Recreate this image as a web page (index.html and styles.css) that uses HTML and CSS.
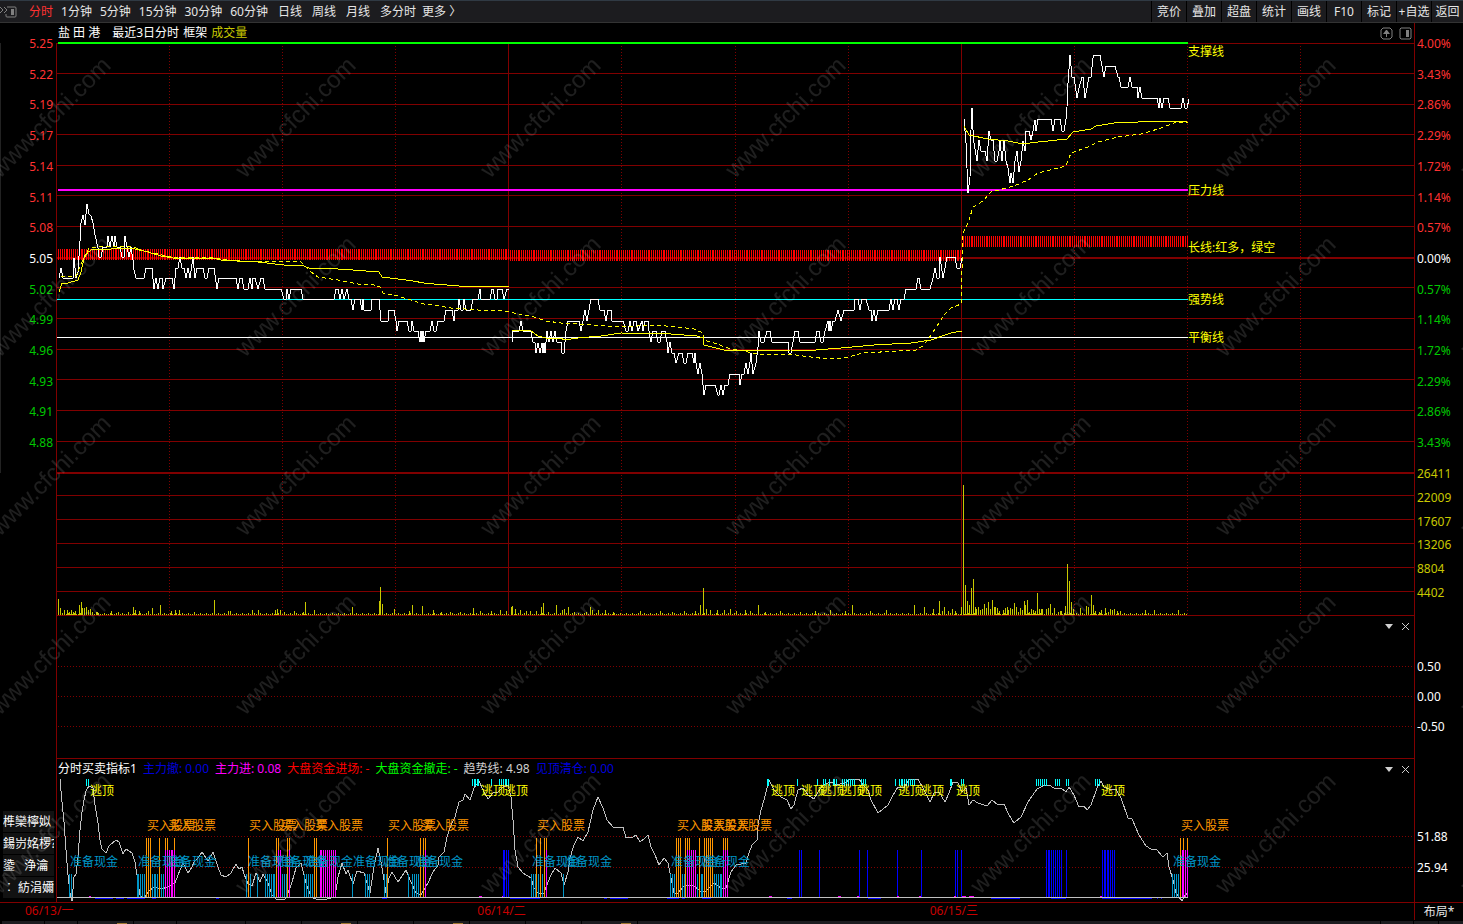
FILE: index.html
```html
<!DOCTYPE html>
<html lang="zh-CN">
<head>
    <meta charset="UTF-8">
    <meta name="viewport" content="width=device-width, initial-scale=1.0">
    <title>盐田港 分时</title>
    <link rel="stylesheet" href="styles.css">
</head>
<body>
    <header class="toolbar">
        <button class="dock-button" aria-label="展开">
            <svg width="18" height="14" viewBox="0 0 18 14">
                <path d="M0 2l3 3-3 3M4 2l3 3-3 3" />
                <path d="M7 2h8q1 0 1 1v8q0 1-1 1H7q-1 0-1-1V9" />
                <path class="filled" d="M11 4h3v6h-3z" />
            </svg>
        </button>
        <nav class="periods">
            <button class="active">分时</button>
            <button>1分钟</button>
            <button>5分钟</button>
            <button>15分钟</button>
            <button>30分钟</button>
            <button>60分钟</button>
        </nav>
        <nav class="periods periods-long">
            <button>日线</button>
            <button>周线</button>
            <button>月线</button>
            <button>多分时</button>
        </nav>
        <button class="more">更多 〉</button>
        <nav class="actions">
            <button>竞价</button>
            <button>叠加</button>
            <button>超盘</button>
            <button>统计</button>
            <button>画线</button>
            <button>F10</button>
            <button>标记</button>
            <button>+自选</button>
            <button>返回</button>
        </nav>
    </header>

    <main class="board">
        <div class="chart-title">
            <span class="stock-name">盐 田 港</span>
            <span>最近3日分时</span>
            <span>框架</span>
            <span class="olive">成交量</span>
            <span class="panel-tools">
                <button aria-label="上移">
                    <svg width="13" height="13" viewBox="0 0 13 13">
                        <path d="M3 1h7l2 2v7l-2 2H3l-2-2V3z" />
                        <path class="filled" d="M6 3h1l3 4H7v3H6V7H3z" />
                    </svg>
                </button>
                <button aria-label="侧栏">
                    <svg width="13" height="13" viewBox="0 0 13 13">
                        <path d="M2 1h9l1 1v9l-1 1H2l-1-1V2z" />
                        <path class="filled" d="M7 3h3v7H7z" />
                    </svg>
                </button>
            </span>
        </div>
        <div class="axis-right"></div>

        <ul class="axis-left">
            <li class="up">5.25</li>
            <li class="up">5.22</li>
            <li class="up">5.19</li>
            <li class="up">5.17</li>
            <li class="up">5.14</li>
            <li class="up">5.11</li>
            <li class="up">5.08</li>
            <li>5.05</li>
            <li class="down">5.02</li>
            <li class="down">4.99</li>
            <li class="down">4.96</li>
            <li class="down">4.93</li>
            <li class="down">4.91</li>
            <li class="down">4.88</li>
            <li></li>
        </ul>
        <div class="plot"><svg id="price" viewBox="57 43 1357 430" preserveAspectRatio="none"></svg></div>
        <ul class="axis-right">
            <li class="up">4.00%</li>
            <li class="up">3.43%</li>
            <li class="up">2.86%</li>
            <li class="up">2.29%</li>
            <li class="up">1.72%</li>
            <li class="up">1.14%</li>
            <li class="up">0.57%</li>
            <li>0.00%</li>
            <li class="down">0.57%</li>
            <li class="down">1.14%</li>
            <li class="down">1.72%</li>
            <li class="down">2.29%</li>
            <li class="down">2.86%</li>
            <li class="down">3.43%</li>
            <li class="olive">26411</li>
        </ul>

        <div></div>
        <div class="plot"><svg id="volume" viewBox="57 473 1357 143" preserveAspectRatio="none"></svg></div>
        <ul class="axis-right olive">
            <li></li>
            <li>22009</li>
            <li>17607</li>
            <li>13206</li>
            <li>8804</li>
            <li>4402</li>
            <li></li>
        </ul>

        <div></div>
        <div class="plot">
            <svg id="aux" viewBox="57 616 1357 143" preserveAspectRatio="none"></svg>
            <span class="panel-tools panel-corner">
                <button aria-label="菜单"><svg width="9" height="9" viewBox="0 0 9 9"><path class="glyph" d="M1 2h8L5 7z" /></svg></button>
                <button aria-label="关闭"><svg width="9" height="9" viewBox="0 0 9 9"><path class="cross" d="M1 1l7 7M8 1L1 8" /></svg></button>
            </span>
        </div>
        <ul class="axis-right axis-aux">
            <li>0.50</li>
            <li>0.00</li>
            <li>-0.50</li>
        </ul>

        <div class="side-tabs">
            <button>榫欒檸姒</button>
            <button>鍚岃姳椤?(</button>
            <button>鍌&nbsp;&nbsp; 浄瀹</button>
            <button>︰ 紡涓嬭浇</button>
        </div>
        <div class="indicator-title">
            <span>分时买卖指标1</span>
            <span class="blue">主力撤: 0.00</span>
            <span class="magenta">主力进: 0.08</span>
            <span class="red">大盘资金进场: -</span>
            <span class="green">大盘资金撤走: -</span>
            <span class="silver">趋势线: 4.98</span>
            <span class="blue">见顶清仓: 0.00</span>
            <span class="panel-tools">
                <button aria-label="菜单"><svg width="9" height="9" viewBox="0 0 9 9"><path class="glyph" d="M1 2h8L5 7z" /></svg></button>
                <button aria-label="关闭"><svg width="9" height="9" viewBox="0 0 9 9"><path class="cross" d="M1 1l7 7M8 1L1 8" /></svg></button>
            </span>
        </div>
        <div class="axis-right"></div>
        <div class="plot"><svg id="indicator" viewBox="57 779 1357 123" preserveAspectRatio="none"></svg></div>
        <ul class="axis-right axis-indicator">
            <li>51.88</li>
            <li>25.94</li>
        </ul>
    </main>

    <div class="dates">
        <span>06/13/一</span>
        <span>06/14/二</span>
        <span>06/15/三</span>
        <button class="layout-button">布局*</button>
    </div>
    <div class="tab-strip">
        <i class="w42"></i><i class="w33"></i><i class="w56 mark"></i><i class="w42"></i><i class="w69"></i><i class="w56"></i><i class="w56 mark"></i><i class="w56"></i><i class="w56 mark"></i><i class="w56"></i><i class="w56"></i><i class="w56 mark"></i><i class="rest"></i><i class="w33"></i><i class="w24"></i><i class="w24"></i>
    </div>

    <svg class="watermark" aria-hidden="true">
        <pattern id="mark" x="-72" y="29" width="245" height="179" patternUnits="userSpaceOnUse">
            <text transform="translate(128 94) rotate(-45)" text-anchor="middle">www.cfchi.com</text>
        </pattern>
        <rect width="100%" height="100%" fill="url(#mark)" />
    </svg>

    <script src="chart.js"></script>
</body>
</html>
```
FILE: styles.css
```css
* {
    box-sizing: border-box;
}

body {
    margin: 0;
    min-height: 100vh;
    display: flex;
    flex-direction: column;
    position: relative;
    overflow: hidden;
    background-color: #000;
    color: #fff;
    font-family: "Noto Sans", "Noto Sans CJK SC", sans-serif;
    font-size: 12px;
    line-height: 16px;
}

button {
    padding: 0;
    border: none;
    background: none;
    color: inherit;
    font: inherit;
    white-space: nowrap;
    cursor: pointer;
}

ul {
    margin: 0;
    padding: 0;
    list-style: none;
}

.up { color: #ff3232; }
.down { color: #00c800; }
.olive { color: #c8c800; }
.blue { color: #0000dc; }
.magenta { color: #f0f; }
.red { color: #f00; }
.green { color: #0f0; }
.silver { color: #d0d0d0; }

/* toolbar */
.toolbar {
    display: flex;
    align-items: stretch;
    height: 23px;
    border-top: 1px solid #303a44;
    border-bottom: 1px solid #333;
    background-color: #1c1c1f;
    color: #e6e6e6;
}

.dock-button {
    display: flex;
    align-items: center;
    width: 29px;
}

.toolbar svg,
.panel-tools svg {
    display: block;
    fill: none;
    stroke: #808080;
}

.toolbar svg .filled,
.panel-tools svg .filled {
    fill: #808080;
    stroke: none;
}

.periods {
    display: flex;
    gap: 8px;
}

.periods-long {
    gap: 10px;
    margin: 0 6px 0 10px;
}

.active {
    color: #ff3232;
}

.actions {
    display: flex;
    margin-left: auto;
}

.actions button {
    width: 35px;
    border-left: 1px solid #000;
    overflow: hidden;
}

.actions button:last-child {
    width: 32px;
}

/* chart grid: left axis, plot, right axis */
.board {
    flex: 1;
    display: grid;
    grid-template-columns: 56px 1fr 49px;
    grid-template-rows: 20px 430fr 143fr 143fr 20px 123fr;
    min-height: 0;
}

.chart-title {
    grid-column: 1 / 3;
    display: flex;
    align-items: center;
    gap: 4px;
    padding: 0 2px 0 58px;
}

.stock-name {
    margin-right: 8px;
}

.panel-tools {
    display: flex;
    align-items: center;
    gap: 6px;
    margin-left: auto;
}

.panel-tools .glyph {
    fill: #d0d0d0;
    stroke: none;
}

.panel-tools .cross {
    stroke: #d0d0d0;
}

.plot {
    position: relative;
    border-left: 1px solid #800000;
    min-height: 0;
}

.plot > svg {
    position: absolute;
    width: 100%;
    height: 100%;
    overflow: visible;
    shape-rendering: crispEdges;
}

.panel-corner {
    position: absolute;
    top: 6px;
    right: 4px;
}

.axis-left,
.axis-right {
    display: flex;
    flex-direction: column;
    justify-content: space-between;
}

.axis-left {
    padding-right: 3px;
    border-left: 1px solid #222;
    text-align: right;
}

.axis-right {
    padding-left: 2px;
    border-left: 1px solid #800000;
}

.axis-left li,
.axis-right li {
    height: 0;
    line-height: 1px;
}

.axis-aux {
    padding-top: 50px;
    padding-bottom: 33px;
}

.axis-indicator {
    padding-top: 57px;
    padding-bottom: 35px;
}

.side-tabs {
    grid-row: 5 / 7;
    grid-column: 1;
    display: flex;
    flex-direction: column;
    justify-content: flex-end;
    gap: 1px;
    padding: 0 2px 4px 3px;
}

.side-tabs button {
    height: 21px;
    overflow: hidden;
    background-color: #121212;
    text-align: left;
}

.indicator-title {
    display: flex;
    align-items: center;
    gap: 6px;
    padding: 0 4px 0 1px;
    border-left: 1px solid #800000;
    line-height: 14px;
    white-space: nowrap;
}

.indicator-title .panel-tools,
.panel-corner {
    gap: 8px;
}

/* series */
.grid { fill: #800000; }
.dotted { fill: none; stroke: #800000; stroke-dasharray: 1 2; }
.support { fill: #0f0; }
.pressure { fill: #f0f; }
.strong { fill: #0ff; }
.balance { fill: #fff; }
.trend-bar { fill: #f00; }
.volume-bar { fill: #c8c800; }
.price-line { fill: none; stroke: #fff; }
.average { fill: none; stroke: #ff0; }
.average-long { fill: none; stroke: #ff0; stroke-dasharray: 4 3; }
.signal-line { fill: none; stroke: #c0c0c0; }
.signal-base { fill: #c0c0c0; }
.buy-bar { fill: #ff9600; }
.inflow-bar { fill: #f0f; }
.cash-bar { fill: #0096c8; }
.outflow-bar { fill: #00f; }
.top-mark { fill: #0ff; }

/* labels sit over the chart at data positions */
.tag {
    position: absolute;
    margin-top: -7px;
    white-space: nowrap;
    color: #ff0;
}

.tag.buy { color: #ff9600; }
.tag.cash { color: #0096c8; }

.dates {
    display: grid;
    grid-template-columns: repeat(3, 1fr) 32px 49px;
    height: 18px;
    padding-left: 25px;
    border-top: 1px solid #800000;
    color: #c80000;
    line-height: 16px;
}

.layout-button {
    grid-column: 5;
    border-left: 1px solid #800000;
    color: #e6e6e6;
}

.tab-strip {
    display: flex;
    gap: 1px;
    height: 4px;
    padding: 1px 0 0 2px;
}

.tab-strip i {
    background-color: #1c1c1f;
}

.tab-strip .w24 { width: 24px; }
.tab-strip .w33 { width: 32px; }
.tab-strip .w42 { width: 42px; }
.tab-strip .w56 { width: 55px; }
.tab-strip .w69 { width: 68px; }
.tab-strip .rest { flex: 1; }

.tab-strip .mark {
    background-image: linear-gradient(#a07830, #a07830);
    background-position: right 6px bottom;
    background-repeat: no-repeat;
    background-size: 10px 1px;
}

.watermark {
    position: absolute;
    inset: 0;
    width: 100%;
    height: 100%;
    pointer-events: none;
}

.watermark text {
    fill: #fff;
    fill-opacity: 0.12;
    font-family: "Liberation Sans", Arial, sans-serif;
    font-size: 24px;
}
```
FILE: chart.js
```js
const NS = 'http://www.w3.org/2000/svg';
const LEFT = 57;
const WIDTH = 1357;
const DATA_END = 1188;
const BAR_STEP = 1.884; // 240 minutes per trading day

const price = document.getElementById('price');
const volume = document.getElementById('volume');
const aux = document.getElementById('aux');
const indicator = document.getElementById('indicator');

function add(svg, name, attrs) {
    const node = document.createElementNS(NS, name);
    Object.entries(attrs).forEach(([key, value]) => node.setAttribute(key, value));
    svg.appendChild(node);
}

function rect(svg, cls, x, y, width, height) {
    add(svg, 'rect', { class: cls, x, y, width, height });
}

function line(svg, cls, points) {
    add(svg, 'polyline', { class: cls, points, transform: 'translate(1 0)' });
}

function bars(svg, cls, xs, top, bottom) {
    xs.forEach(x => rect(svg, cls, x, top, 1, bottom - top));
}

// place a text label at chart coordinates
function tag(svg, cls, x, y, text) {
    const box = svg.viewBox.baseVal;
    const span = document.createElement('span');
    span.className = `tag ${cls}`;
    span.textContent = text;
    span.style.left = `${(x - box.x) / box.width * 100}%`;
    span.style.top = `${(y - box.y) / box.height * 100}%`;
    svg.parentNode.appendChild(span);
}

// grid
[43, 73, 104, 134, 165, 195, 226, 287, 318, 349, 379, 410, 441].forEach(y => rect(price, 'grid', LEFT, y, WIDTH, 1));
[257, 472].forEach(y => rect(price, 'grid', LEFT, y, WIDTH, 2));
[495, 519, 543, 567, 591, 615].forEach(y => rect(volume, 'grid', LEFT, y, WIDTH, 1));
[169, 282, 395, 621, 735, 848, 1074, 1187, 1300].forEach(x => {
    add(price, 'path', { class: 'dotted', d: `M${x} 46V472` });
    add(volume, 'path', { class: 'dotted', d: `M${x} 475V615` });
});
[508, 961].forEach(x => {
    rect(price, 'grid', x, 43, 1, 430);
    rect(volume, 'grid', x, 473, 1, 143);
});
[666, 696, 726].forEach(y => add(aux, 'path', { class: 'dotted', d: `M58 ${y}H1413` }));
rect(aux, 'grid', LEFT, 758, WIDTH, 1);
[836, 867].forEach(y => add(indicator, 'path', { class: 'dotted', d: `M58 ${y}H1413` }));

// long trend bars, one level per day
[[58, 249], [510, 250], [963, 236]].forEach(([start, top]) => {
    for (let i = 0; i < 240; i++) {
        const x = Math.round(start + i * BAR_STEP);
        if (x < DATA_END) rect(price, 'trend-bar', x, top, 1, 11);
    }
});

rect(price, 'support', 58, 42, 1130, 2);
rect(price, 'pressure', 58, 189, 1130, 2);
rect(price, 'strong', 57, 299, 1131, 1);
rect(price, 'balance', 57, 337, 1131, 1);

// prices
line(price, 'price-line', '58,278 60,268 62,278 72,278 73,258 75,278 77,272 79,241 80,223 82,215 84,225 86,204 88,214 90,216 92,223 94,235 97,248 98,257 100,257 102,247 106,247 107,236 109,247 111,236 113,247 114,236 116,247 119,247 121,257 123,257 124,236 126,247 128,257 130,247 132,260 133,270 135,278 143,278 145,268 151,268 153,289 155,278 157,289 159,278 161,278 162,289 165,278 171,278 173,289 175,268 177,268 179,257 181,268 183,268 185,278 187,268 189,278 192,257 194,278 196,268 202,268 204,278 206,278 208,268 213,268 216,289 218,278 235,278 237,289 239,278 241,278 243,289 247,289 249,278 251,289 252,278 254,278 257,289 260,278 262,278 264,289 280,289 283,299 285,299 286,289 288,299 290,289 300,289 302,299 333,299 335,289 337,289 339,299 341,289 343,299 346,289 348,299 350,299 352,310 354,299 359,299 361,310 362,299 363,310 370,310 371,299 378,299 380,321 387,321 388,310 393,310 395,321 396,331 398,321 406,321 408,331 410,331 411,321 413,331 417,331 419,342 420,331 421,342 422,331 423,342 425,331 429,331 431,321 433,331 435,331 437,321 443,321 445,310 451,310 453,321 454,310 457,310 458,299 460,310 462,310 463,299 465,310 470,310 472,299 477,299 479,289 480,299 489,299 491,289 492,289 494,299 496,299 497,289 501,289 503,299 506,289 508,289');
line(price, 'price-line', '511,342 512,331 518,331 520,321 522,331 530,331 532,342 534,343 535,353 537,343 539,353 541,343 542,353 543,343 544,353 546,331 548,342 550,331 552,342 554,331 556,342 560,342 561,353 563,353 565,331 567,321 578,321 580,331 582,321 584,310 586,321 588,310 590,299 597,299 599,310 603,310 605,321 607,310 610,310 611,321 622,321 625,331 627,331 629,321 631,331 633,321 635,321 637,331 641,321 642,331 644,321 647,321 648,331 650,342 652,331 655,331 657,342 659,342 661,331 664,331 666,342 667,353 669,342 671,353 673,353 675,363 678,353 681,353 683,363 685,363 687,353 691,353 693,363 694,353 695,363 697,374 699,363 701,374 702,385 703,395 705,385 714,385 717,395 718,395 720,385 722,395 724,385 727,385 729,374 738,374 739,385 741,374 743,374 745,363 747,374 749,362 750,353 752,374 755,363 757,347 758,331 760,342 763,342 766,331 769,331 771,342 787,342 788,353 790,353 792,342 794,331 797,331 799,342 814,342 816,331 818,331 820,342 822,342 824,331 827,321 828,331 829,321 830,331 832,321 834,321 837,310 840,321 843,310 853,310 854,299 857,299 859,310 861,299 865,299 868,310 870,310 871,321 873,310 875,321 877,310 888,310 890,299 892,310 894,299 896,299 898,310 900,299 903,299 905,289 915,289 917,278 918,278 920,289 929,289 932,278 934,268 936,278 938,278 939,257 942,278 944,268 946,257 954,257 956,268 959,268 961,258');
line(price, 'price-line', '963,119 965,143 967,193 969,177 970,130 971,108 972,130 973,143 976,161 978,140 980,151 984,151 986,161 988,131 990,140 992,140 994,161 996,161 998,151 999,141 1001,161 1003,141 1005,161 1007,168 1009,183 1010,173 1012,183 1014,161 1016,151 1018,172 1020,161 1022,141 1024,151 1025,131 1028,131 1030,140 1032,131 1034,120 1035,131 1037,119 1050,119 1052,131 1054,119 1059,119 1061,131 1063,131 1065,119 1066,107 1067,83 1069,55 1071,77 1073,77 1076,98 1078,88 1081,77 1082,77 1084,98 1086,88 1088,77 1090,77 1092,58 1093,55 1099,55 1101,66 1103,77 1105,66 1114,66 1117,77 1118,77 1120,87 1127,87 1129,77 1131,87 1136,87 1137,98 1139,87 1141,98 1156,98 1158,108 1159,98 1161,108 1163,98 1167,98 1169,108 1180,108 1182,98 1184,108 1186,108 1188,99');

// daily averages
line(price, 'average', '58,292 61,283 67,283 77,280 80,272 83,258 87,252 92,249 110,249 130,248 147,252 160,256 172,258 213,258 220,260 257,262 283,265 300,265 308,268 337,269 352,270 378,272 381,277 397,279 412,281 423,283 433,284 458,286 508,286');
line(price, 'average', '511,330 530,331 537,336 545,338 560,338 563,340 577,338 600,336 620,333 670,334 696,336 702,338 703,345 723,350 747,351 790,350 815,350 840,348 873,345 910,343 930,340 950,333 961,331');
line(price, 'average', '963,126 968,135 987,139 1007,141 1022,144 1037,142 1066,139 1072,132 1090,129 1095,126 1113,123 1137,122 1187,121');
line(price, 'average-long', '60,277 75,276 79,267 83,257 88,248 97,247 130,246 143,251 170,257 213,258 233,261 300,262 310,272 317,277 337,280 357,284 373,285 379,287 382,293 397,296 413,301 423,304 433,305 450,308 477,310 503,311 533,317 545,321 560,323 593,325 620,327 653,325 677,327 693,329 702,333 703,340 713,343 727,348 742,351 757,354 787,354 810,357 827,359 843,358 862,353 915,350 922,346 930,335 938,323 943,315 950,308 960,304 962,233 965,227 968,220 972,207 982,201 990,192 1013,186 1027,180 1037,173 1053,169 1065,166 1070,153 1087,147 1097,142 1117,137 1140,134 1157,129 1173,123 1187,122');

tag(price, '', 1188, 51, '支撑线');
tag(price, '', 1188, 190, '压力线');
tag(price, '', 1188, 247, '长线:红多，绿空');
tag(price, '', 1188, 299, '强势线');
tag(price, '', 1188, 337, '平衡线');

// volume: quiet minutes first, then the busy ones as x: height
for (let x = 58, i = 0; x < DATA_END; x += 2, i++) {
    const height = i % 3 === 2 ? 2 : 1;
    if (x !== 510 && x !== 962) rect(volume, 'volume-bar', x, 615 - height, 1, height);
}
const busy = {
    58: 16, 60: 7, 62: 2, 64: 5, 67: 5, 69: 3, 71: 5, 73: 3, 75: 4, 79: 10, 81: 13, 82: 7, 84: 7, 86: 8, 88: 5, 90: 6, 92: 3,
    96: 3, 97: 3, 111: 4, 118: 3, 128: 3, 133: 8, 135: 5, 139: 4, 148: 4, 152: 7, 160: 10, 171: 4, 175: 5, 179: 5, 194: 3,
    214: 15, 228: 4, 230: 4, 252: 5, 258: 5, 275: 5, 277: 6, 280: 5, 284: 3, 294: 4, 303: 3, 305: 13, 314: 5, 352: 8, 379: 14,
    380: 28, 382: 11, 394: 6, 409: 4, 412: 10, 422: 9, 433: 5, 441: 3, 450: 3, 460: 3, 473: 7, 480: 4, 491: 4, 500: 5, 506: 4,
    511: 8, 512: 9, 515: 6, 520: 5, 526: 4, 530: 4, 536: 4, 541: 8, 543: 12, 548: 3, 556: 10, 562: 5, 564: 6, 568: 8, 574: 3,
    586: 3, 590: 8, 592: 5, 598: 5, 605: 5, 613: 3, 640: 4, 660: 4, 672: 3, 684: 4, 695: 4, 700: 10, 703: 27, 706: 6, 710: 5,
    717: 5, 724: 5, 730: 6, 736: 4, 745: 5, 750: 4, 758: 10, 765: 3, 780: 4, 800: 3, 815: 4, 830: 5, 845: 4, 852: 10, 870: 4,
    886: 5, 914: 10, 924: 8, 933: 6, 939: 14, 942: 4, 944: 8, 948: 4, 952: 6, 955: 4, 961: 8, 963: 130, 965: 30, 967: 14,
    969: 10, 971: 27, 973: 36, 975: 8, 976: 6, 978: 8, 980: 5, 982: 6, 984: 11, 986: 7, 988: 13, 990: 6, 992: 15, 994: 8,
    995: 8, 997: 7, 999: 4, 1003: 5, 1005: 7, 1007: 8, 1008: 5, 1010: 7, 1012: 6, 1014: 12, 1016: 8, 1018: 3, 1020: 7,
    1022: 5, 1024: 14, 1025: 10, 1027: 15, 1029: 3, 1031: 6, 1033: 5, 1035: 4, 1037: 22, 1039: 6, 1041: 6, 1042: 6, 1046: 6,
    1048: 7, 1050: 11, 1054: 7, 1058: 3, 1060: 4, 1061: 4, 1065: 9, 1067: 51, 1069: 34, 1071: 13, 1073: 6, 1080: 7, 1086: 9,
    1088: 8, 1091: 20, 1093: 10, 1095: 4, 1099: 3, 1101: 5, 1105: 7, 1108: 3, 1110: 6, 1112: 5, 1114: 6, 1117: 4, 1120: 4,
    1145: 5, 1154: 5, 1178: 5
};
Object.entries(busy).forEach(([x, height]) => rect(volume, 'volume-bar', x, 615 - height, 1, height));

// indicator signals
const BASE = 897;
line(indicator, 'signal-line', '59,779 61,802 63,822 65,850 67,875 69,893 71,901 73,877 75,874 77,857 79,830 81,812 83,800 85,791 88,786 92,788 94,805 97,823 99,840 101,849 105,853 108,846 115,840 118,842 122,854 125,849 131,853 134,862 137,882 139,895 143,899 147,892 153,887 160,889 167,887 174,883 177,875 182,863 187,873 191,867 193,862 197,858 201,852 207,861 212,852 217,867 220,875 225,877 230,873 235,864 238,869 241,867 243,874 247,884 251,886 255,873 259,882 262,874 267,883 271,895 275,899 284,899 287,893 291,882 295,868 300,863 305,883 310,897 315,899 326,899 334,897 337,877 341,863 345,874 347,870 352,884 356,871 363,873 366,883 369,893 373,867 377,848 380,862 383,880 385,893 388,878 391,872 397,882 405,870 410,882 415,893 420,895 424,888 427,883 432,872 437,865 438,857 443,852 446,837 450,825 454,817 458,802 462,800 464,794 469,800 473,788 478,781 483,792 487,799 492,793 497,792 502,787 507,785 510,797 512,820 514,850 517,867 522,873 530,878 533,888 537,893 543,893 547,882 550,875 554,868 560,873 563,885 567,872 569,858 573,845 577,837 582,841 587,832 592,810 597,797 602,808 606,820 612,827 622,827 625,838 632,837 635,835 639,842 643,839 647,835 650,847 654,855 658,865 663,858 667,863 670,878 673,893 677,893 683,886 692,885 700,892 705,891 713,883 720,888 725,888 730,872 735,865 745,863 748,853 751,845 756,840 757,825 760,810 763,800 766,788 768,780 773,790 780,797 786,800 790,809 793,805 797,790 802,788 807,795 813,799 817,792 822,785 830,782 835,785 843,783 850,779 858,779 862,785 867,790 870,800 877,813 887,805 892,795 897,787 903,788 908,779 917,779 922,788 929,802 933,793 938,792 944,802 948,793 952,782 957,783 961,792 965,788 968,805 972,800 977,803 986,806 991,800 997,805 1003,804 1008,815 1013,823 1020,817 1027,802 1036,789 1042,786 1048,785 1053,788 1060,788 1065,792 1068,787 1073,795 1078,807 1083,806 1086,810 1090,805 1096,788 1100,781 1103,787 1108,789 1115,789 1120,798 1127,818 1131,819 1138,835 1145,846 1150,849 1155,849 1162,857 1166,853 1168,867 1172,880 1175,893 1181,901 1184,895 1187,893');

bars(indicator, 'cash-bar', [69, 71, 137, 138, 140, 142, 144, 152, 154, 155, 157, 161, 163, 246, 250, 257, 265, 267, 269, 271, 273, 274, 282, 284, 286, 304, 306, 308, 310, 312, 352, 365, 367, 369, 384, 386, 408, 412, 414, 416, 418, 531, 533, 535, 538, 542, 563, 670, 672, 674, 682, 684, 697, 701, 702, 714, 716, 718, 720, 721, 1172, 1174, 1176, 1178], 874, BASE);
bars(indicator, 'buy-bar', [146, 148, 150, 159, 165, 167, 174, 248, 276, 278, 287, 289, 314, 316, 387, 420, 423, 425, 536, 540, 544, 546, 676, 678, 680, 685, 687, 689, 699, 704, 706, 708, 710, 712, 723, 725, 727, 1180, 1183, 1187], 838, BASE);
bars(indicator, 'inflow-bar', [165, 167, 169, 171, 172, 174, 278, 280, 289, 320, 321, 323, 325, 327, 329, 331, 333, 335, 425, 546, 687, 689, 691, 693, 695, 723, 725, 727, 1182, 1183, 1185, 1187], 850, BASE);
bars(indicator, 'outflow-bar', [503, 504, 506, 508, 799, 801, 819, 859, 867, 897, 921, 955, 957, 961, 1046, 1048, 1049, 1051, 1053, 1055, 1057, 1059, 1061, 1066, 1102, 1104, 1105, 1107, 1108, 1110, 1112, 1114], 850, BASE);
bars(indicator, 'top-mark', [86, 88, 472, 474, 475, 477, 478, 491, 499, 501, 503, 505, 506, 508, 767, 768, 797, 817, 823, 825, 829, 833, 834, 836, 842, 844, 846, 848, 850, 852, 854, 861, 863, 865, 895, 899, 901, 902, 904, 906, 908, 910, 912, 914, 950, 951, 961, 963, 1036, 1038, 1040, 1042, 1044, 1046, 1055, 1057, 1059, 1066, 1068, 1095, 1097, 1099], 779, 786);

rect(indicator, 'signal-base', LEFT, BASE, 1131, 1);
[[95, 18], [116, 8], [127, 18], [152, 4], [216, 3], [382, 5], [510, 30], [604, 3], [610, 18], [667, 12], [682, 3], [702, 9], [787, 5], [868, 13], [991, 29], [1051, 15], [1102, 50], [1157, 1], [1161, 1]]
    .forEach(([x, width]) => rect(indicator, 'outflow-bar', x, BASE + 1, width, 1));
[[89, 2], [479, 3], [502, 1], [769, 3], [838, 3], [857, 2], [897, 2], [919, 2], [954, 2], [962, 4], [969, 5], [1100, 2]]
    .forEach(([x, width]) => rect(indicator, 'inflow-bar', x, BASE - 1, width, 1));

[90, 481, 504, 771, 801, 820, 840, 858, 898, 920, 956, 1101].forEach(x => tag(indicator, '', x, 790, '逃顶'));
[147, 168, 249, 280, 315, 388, 421, 537, 677, 701, 724, 1181].forEach(x => tag(indicator, 'buy', x, 825, '买入股票'));
[70, 138, 168, 248, 278, 305, 353, 385, 415, 532, 564, 671, 702, 1173].forEach(x => tag(indicator, 'cash', x, 861, '准备现金'));
```
